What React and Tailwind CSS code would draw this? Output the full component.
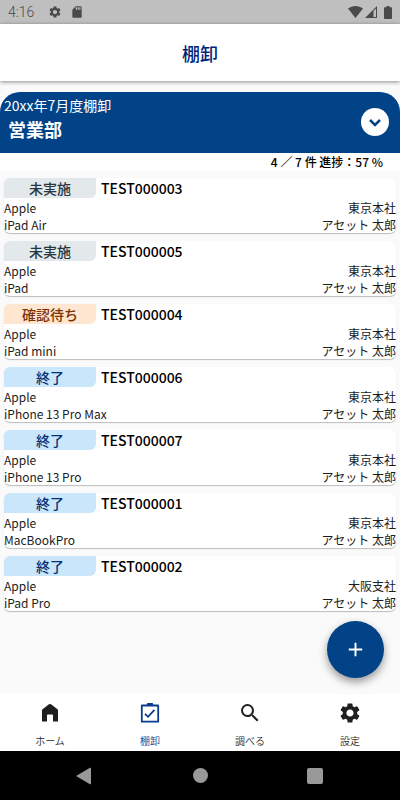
import { MdAdd, MdBatteryFull, MdSdCard, MdSearch, MdSettings } from 'react-icons/md';

const STATUS = {
  未実施: 'bg-[#e3e8ea] text-[#263640]',
  確認待ち: 'bg-[#ffe6d0] text-[#7a3208]',
  終了: 'bg-[#c9e6fb] text-[#062f73]',
};

const ASSETS = [
  { code: 'TEST000003', status: '未実施', model: 'iPad Air', office: '東京本社' },
  { code: 'TEST000005', status: '未実施', model: 'iPad', office: '東京本社' },
  { code: 'TEST000004', status: '確認待ち', model: 'iPad mini', office: '東京本社' },
  { code: 'TEST000006', status: '終了', model: 'iPhone 13 Pro Max', office: '東京本社' },
  { code: 'TEST000007', status: '終了', model: 'iPhone 13 Pro', office: '東京本社' },
  { code: 'TEST000001', status: '終了', model: 'MacBookPro', office: '東京本社' },
  { code: 'TEST000002', status: '終了', model: 'iPad Pro', office: '大阪支社' },
];

function StatusBar() {
  return (
    <div className="flex h-6 items-center justify-between bg-[#bfbfbf] px-2 text-[#4a4a4a]">
      <div className="flex items-center">
        <span className="w-10 font-['Roboto',sans-serif] text-sm leading-6 font-light">4:16</span>
        <MdSettings size={14} />
        <MdSdCard size={14} className="ml-2" />
      </div>
      <div className="flex items-center">
        <svg width="15" height="12" viewBox="0 0 15 12" fill="currentColor" aria-hidden="true">
          <path d="M0 2.6C4.3-.8 10.7-.8 15 2.6L7.5 12z" />
        </svg>
        <svg width="12" height="12" viewBox="0 0 12 12" className="ml-0.5" aria-hidden="true">
          <path d="M12 0v12H0z" fill="currentColor" />
          <path d="M11 2.5V11H8.5V5z" fill="#bfbfbf" />
        </svg>
        <svg width="8" height="13" viewBox="0 0 8 13" fill="currentColor" className="ml-[7px]" aria-hidden="true">
          <path d="M2.500 0h3v1.300H7.200q.8 0 .8.8V12.200q0 .8-.8.8H.8q-.8 0-.8-.8V2.100q0-.8.8-.8h1.700z" />
        </svg>
      </div>
    </div>
  );
}

function AssetCard({ asset }) {
  return (
    <li className="rounded-md bg-white shadow-[0_1px_1px_rgba(0,0,0,0.25)]">
      <div className="flex h-[21px] items-start gap-1">
        <span className={`h-5 w-[92px] rounded-tl-md rounded-br-md text-center text-sm leading-5 font-medium ${STATUS[asset.status]}`}>
          {asset.status}
        </span>
        <span className="pl-px text-sm leading-5 font-medium text-black">{asset.code}</span>
      </div>
      <div className="flex justify-between text-xs leading-[17px] text-[#1c1c1c]">
        <div>
          <p>Apple</p>
          <p>{asset.model}</p>
        </div>
        <div className="text-right">
          <p>{asset.office}</p>
          <p>アセット 太郎</p>
        </div>
      </div>
    </li>
  );
}

function HomeIcon() {
  return (
    <svg width="24" height="24" viewBox="0 0 24 24" fill="currentColor" aria-hidden="true">
      <path d="M4 20.5V9.200q0-.6.5-1L11 3.300q1-.7 2 0l6.500 4.900q.5.400.5 1v11.300h-5v-6q0-1-1-1h-4q-1 0-1 1v6z" />
    </svg>
  );
}

function ClipboardIcon() {
  return (
    <svg width="24" height="24" viewBox="0 0 24 24" fill="none" stroke="currentColor" strokeWidth="1.8" aria-hidden="true">
      <path d="M3.800 4.500h16.400v16.200H3.800z" strokeLinejoin="round" />
      <path d="M9.800 4.500V3h4.400v1.500" strokeLinejoin="round" />
      <path d="M7 12.800l3 3 6.500-7" />
    </svg>
  );
}

function ChevronIcon() {
  return (
    <svg width="18" height="18" viewBox="0 0 18 18" fill="none" stroke="currentColor" strokeWidth="2.5" aria-hidden="true">
      <path d="M4 7l5 5 5-5" />
    </svg>
  );
}

const TABS = [
  { label: 'ホーム', icon: <HomeIcon /> },
  { label: '棚卸', icon: <ClipboardIcon />, active: true },
  { label: '調べる', icon: <MdSearch size={24} /> },
  { label: '設定', icon: <MdSettings size={24} /> },
];

export default function App() {
  return (
    <div className="flex min-h-screen flex-col bg-[#fafafa] font-['Noto_Sans_CJK_JP',sans-serif]">
      <StatusBar />
      <header className="flex h-[57px] items-center justify-center bg-white shadow-[0_1px_4px_rgba(0,0,0,0.45)]">
        <h1 className="text-lg font-medium text-[#001f7a]">棚卸</h1>
      </header>

      <main className="relative flex-1 pt-[11px]">
        <section className="flex h-[61px] items-start justify-between rounded-t-[20px] bg-[#024387] pr-[11px] pl-1 text-white">
          <div className="pt-px">
            <p className="text-sm leading-6">20xx年7月度棚卸</p>
            <h2 className="pl-1 text-lg leading-6 font-bold">営業部</h2>
          </div>
          <button type="button" aria-label="詳細を開く" className="mt-4 flex size-7 items-center justify-center rounded-full bg-white text-[#024387]">
            <ChevronIcon />
          </button>
        </section>
        <p className="bg-white pr-[17px] text-right text-xs leading-[18px] font-medium whitespace-pre text-black">4 ／ 7 件 進捗：57 %</p>
        <ul className="flex flex-col gap-2 px-1 pt-[7px] pb-4">
          {ASSETS.map((asset) => (
            <AssetCard key={asset.code} asset={asset} />
          ))}
        </ul>
        <button
          type="button"
          aria-label="追加"
          className="absolute right-4 bottom-4 flex size-[57px] items-center justify-center rounded-full bg-[#024387] text-white shadow-[0_4px_9px_rgba(0,0,0,0.4)]"
        >
          <MdAdd size={23} />
        </button>
      </main>

      <nav className="grid h-[57px] grid-cols-4 bg-white">
        {TABS.map((tab) => (
          <button
            key={tab.label}
            type="button"
            aria-current={tab.active ? 'page' : undefined}
            className={`flex flex-col items-center justify-between pt-[7px] pb-0.5 ${tab.active ? 'text-[#0b3b8c]' : 'text-[#1f1f1f]'}`}
          >
            {tab.icon}
            <span className="text-[10px] leading-4 font-[350]">{tab.label}</span>
          </button>
        ))}
      </nav>

      <div className="grid h-[49px] grid-cols-[1fr_auto_1fr] items-center bg-black text-[#999]">
        <svg width="16" height="18" viewBox="0 0 16 18" fill="currentColor" className="ml-[76px]" aria-hidden="true">
          <path d="M0 9 14 .8q1-.5 1 .5v15.400q0 1-1 .5z" />
        </svg>
        <span className="size-[15px] rounded-full bg-[#999]" />
        <span className="mr-[77px] size-4 justify-self-end rounded-xs bg-[#999]" />
      </div>
    </div>
  );
}
